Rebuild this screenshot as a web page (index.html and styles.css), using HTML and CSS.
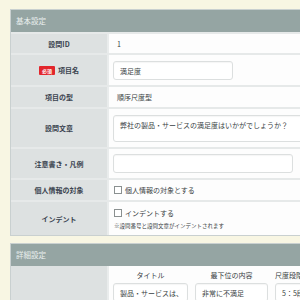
FILE: index.html
```html
<!DOCTYPE html>
<html lang="ja">
<head>
    <meta charset="UTF-8">
    <title>設問設定</title>
    <link rel="stylesheet" href="styles.css">
</head>
<body>
    <div class="panel">
        <div class="panel-head">基本設定</div>
        <div class="row h21">
            <div class="label">設問ID</div>
            <div class="value"><span class="plain">1</span></div>
        </div>
        <div class="row h32">
            <div class="label"><span class="badge">必須</span>項目名</div>
            <div class="value"><div class="field w120">満足度</div></div>
        </div>
        <div class="row h22">
            <div class="label">項目の型</div>
            <div class="value"><span class="plain">順序尺度型</span></div>
        </div>
        <div class="row h40">
            <div class="label">設問文章</div>
            <div class="value"><div class="field area">弊社の製品・サービスの満足度はいかがでしょうか？</div></div>
        </div>
        <div class="row h31">
            <div class="label">注意書き・凡例</div>
            <div class="value"><div class="field w180"></div></div>
        </div>
        <div class="row h22">
            <div class="label">個人情報の対象</div>
            <div class="value"><span class="check"></span>個人情報の対象とする</div>
        </div>
        <div class="row h35 last">
            <div class="label">インデント</div>
            <div class="value stack">
                <div><span class="check"></span>インデントする</div>
                <div class="note">※設問番号と設問文章がインデントされます</div>
            </div>
        </div>
    </div>

    <div class="panel second">
        <div class="panel-head">詳細設定</div>
        <div class="row tall">
            <div class="label"></div>
            <div class="value cols">
                <div class="col-title">タイトル</div>
                <div class="col-title">最下位の内容</div>
                <div class="col-title edge">尺度段階</div>
                <div class="field">製品・サービスは、</div>
                <div class="field">非常に不満足</div>
                <div class="field">5：5段階</div>
            </div>
        </div>
    </div>
</body>
</html>
```

FILE: styles.css
```css
html, body {
    margin: 0;
    padding: 0;
    height: 100%;
    overflow: hidden;
}
body {
    background-color: #f8f6e3;
    padding: 9px 0 0 10px;
    font-family: "Noto Sans CJK JP", "Noto Sans", sans-serif;
    font-size: 7px;
    color: #3a3f44;
}
.panel {
    width: 330px;
    border: 1px solid #c9d0d0;
    background: #fdfdfd;
}
.second {
    margin-top: 7px;
}
.panel-head {
    height: 22px;
    line-height: 22px;
    padding-left: 5px;
    background: #95a5a3;
    color: #e9efee;
    font-size: 7.5px;
}
.row {
    display: grid;
    grid-template-columns: 98px 1fr;
    border-top: 2px solid #e6e9e9;
}
.h21 { height: 19px; }
.h22 { height: 20px; }
.h31 { height: 29px; }
.h32 { height: 30px; }
.h35 { height: 33px; }
.h40 { height: 38px; }
.tall { height: 40px; border-top: 0; }
.label {
    background: #dde1e1;
    border-right: 2px solid #e9ecec;
    display: flex;
    align-items: center;
    justify-content: center;
    font-weight: bold;
    color: #3b4450;
}
.value {
    display: flex;
    align-items: center;
    padding: 0 5px 0 4px;
    white-space: nowrap;
}
.plain {
    margin-left: 4px;
}
.badge {
    background: #e2262c;
    color: #fff;
    font-size: 5px;
    padding: 1px 3px;
    border-radius: 1px;
    margin-right: 3px;
}
.field {
    height: 19px;
    line-height: 19px;
    border: 1px solid #dcdfdf;
    border-radius: 3px;
    box-shadow: inset 0 1px 1px rgba(0, 0, 0, 0.04);
    padding: 0 6px;
    background: #fff;
    box-sizing: border-box;
    overflow: hidden;
}
.w120 { width: 120px; }
.w180 { width: 180px; }
.area {
    flex: 1;
    height: 27px;
    line-height: 12px;
    padding-top: 3px;
}
.check {
    display: inline-block;
    width: 6px;
    height: 6px;
    border: 1px solid #8a9090;
    background: #fff;
    margin: 0 3px 0 1px;
    vertical-align: -1px;
}
.stack {
    flex-direction: column;
    align-items: flex-start;
    justify-content: center;
    gap: 4px;
}
.note {
    font-size: 5.5px;
    margin-left: 1px;
}
.cols {
    display: grid;
    grid-template-columns: 75px 73px 75px;
    grid-template-rows: 12px 19px;
    column-gap: 7px;
    row-gap: 2px;
    align-items: end;
    align-content: start;
    padding-top: 3px;
}
.col-title {
    text-align: center;
    align-self: center;
}
.col-title.edge {
    text-align: left;
}
.cols .field {
    padding: 0 6px;
}
```
